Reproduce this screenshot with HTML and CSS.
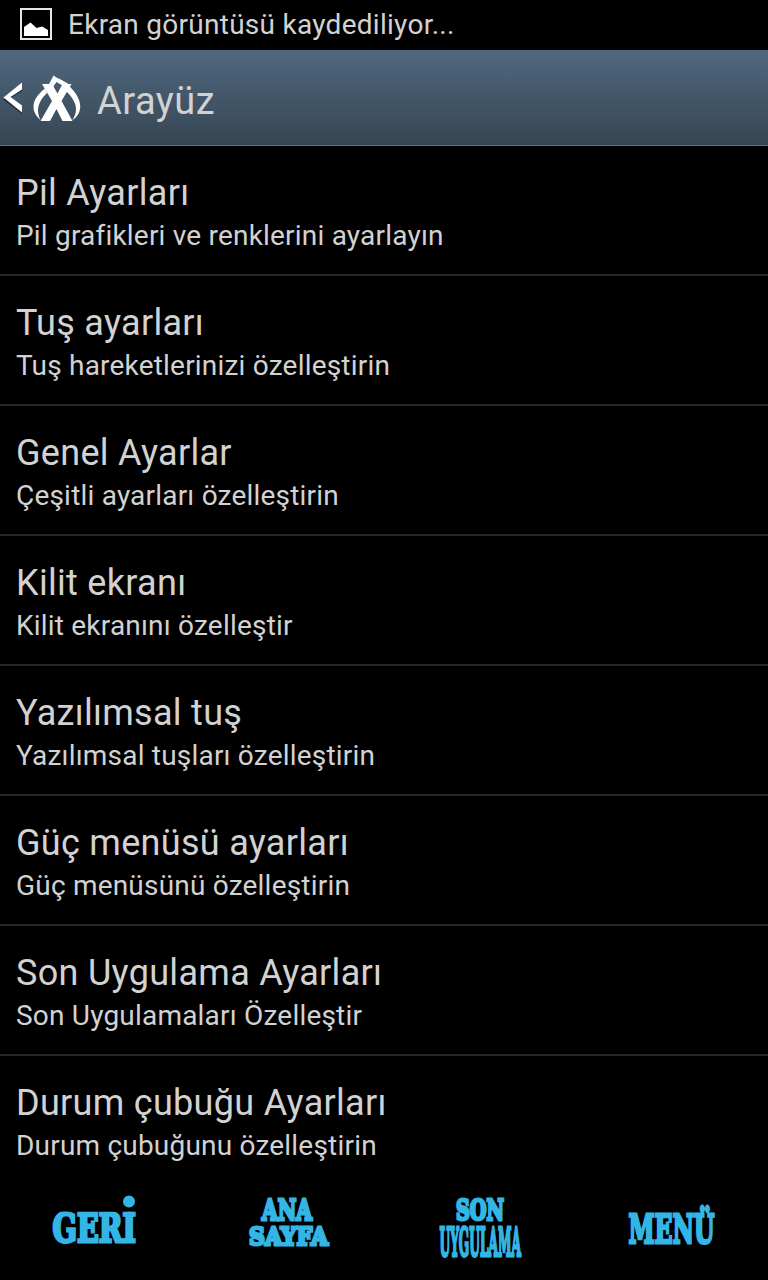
FILE: index.html
```html
<!DOCTYPE html>
<html lang="tr">
<head>
  <meta charset="UTF-8">
  <meta name="viewport" content="width=device-width, initial-scale=1.0">
  <title>Arayüz</title>
  <link rel="stylesheet" href="styles.css">
</head>
<body>
  <div class="status-bar">
    <svg class="picture-icon" width="34" height="34" viewBox="0 0 34 34">
      <rect x="2" y="2" width="30" height="30" fill="none" stroke="#e6e6e6" stroke-width="2"/>
      <path d="M5 29V20L11.500 15.500L17.500 21L23 19.500L29 23V29Z" fill="#fff"/>
    </svg>
    <span>Ekran görüntüsü kaydediliyor...</span>
  </div>

  <header class="action-bar">
    <svg class="back-icon" width="24" height="34" viewBox="0 0 24 34">
      <path d="M22 3V10L10.500 17L22 26V33L3.500 18.500Z" fill="#1c2730"/>
      <path d="M22 1.500V8.500L10.500 16L22 24.500V31.500L3.500 16.500Z" fill="#fff"/>
    </svg>
    <svg class="app-icon" width="48" height="48" viewBox="0 0 48 48">
      <path d="M12 13.500C-3 25-2 37 7.500 45C3 36 4.500 27 14 18Z" fill="#fff"/>
      <path d="M35 10C50 23 51 38 39 45.500C45.500 36 44.500 27 33 16Z" fill="#fff"/>
      <path d="M20.500 0.500C25 4 33 6 37.500 11L32 12L23.500 7L20 12L15.500 10Z" fill="#fff"/>
      <path d="M9 9H19L24.500 18.500L29.500 9H38.500L28.500 26L39.500 46H29.500L23.500 34L17 46H7.500L19 26Z" fill="#fff"/>
    </svg>
    <h1>Arayüz</h1>
  </header>

  <ul class="settings">
    <li>
      <h2>Pil Ayarları</h2>
      <p>Pil grafikleri ve renklerini ayarlayın</p>
    </li>
    <li>
      <h2>Tuş ayarları</h2>
      <p>Tuş hareketlerinizi özelleştirin</p>
    </li>
    <li>
      <h2>Genel Ayarlar</h2>
      <p>Çeşitli ayarları özelleştirin</p>
    </li>
    <li>
      <h2>Kilit ekranı</h2>
      <p>Kilit ekranını özelleştir</p>
    </li>
    <li>
      <h2>Yazılımsal tuş</h2>
      <p>Yazılımsal tuşları özelleştirin</p>
    </li>
    <li>
      <h2>Güç menüsü ayarları</h2>
      <p>Güç menüsünü özelleştirin</p>
    </li>
    <li>
      <h2>Son Uygulama Ayarları</h2>
      <p>Son Uygulamaları Özelleştir</p>
    </li>
    <li>
      <h2>Durum çubuğu Ayarları</h2>
      <p>Durum çubuğunu özelleştirin</p>
    </li>
  </ul>

  <nav class="nav-bar">
    <svg viewBox="0 0 192 96">
      <!-- the round dot replaces the font's own one -->
      <clipPath id="below-dot"><rect x="0" y="27.500" width="192" height="69"/></clipPath>
      <g clip-path="url(#below-dot)">
        <text x="52.500" y="58" font-size="38.500" textLength="83.500" lengthAdjust="spacingAndGlyphs">GERİ</text>
      </g>
      <circle cx="129" cy="17.500" r="4.500"/>
    </svg>
    <svg viewBox="0 0 192 96">
      <text x="70" y="36" font-size="27" textLength="50" lengthAdjust="spacingAndGlyphs">ANA</text>
      <text x="57" y="61" font-size="25" textLength="79" lengthAdjust="spacingAndGlyphs">SAYFA</text>
    </svg>
    <svg viewBox="0 0 192 96">
      <text x="72" y="36" font-size="27" textLength="48" lengthAdjust="spacingAndGlyphs">SON</text>
      <text x="55.500" y="71.500" font-size="39.500" textLength="81.500" lengthAdjust="spacingAndGlyphs">UYGULAMA</text>
    </svg>
    <svg viewBox="0 0 192 96">
      <text x="52.500" y="58.500" font-size="40" textLength="86" lengthAdjust="spacingAndGlyphs">MENÜ</text>
    </svg>
  </nav>
</body>
</html>
```
FILE: styles.css
```css
* {
  box-sizing: border-box;
}

body {
  margin: 0;
  height: 1280px;
  display: flex;
  flex-direction: column;
  overflow: hidden;
  background-color: #000;
  color: #d2d2d2;
  font-family: Roboto, sans-serif;
}

h1, h2, p, ul {
  margin: 0;
  padding: 0;
  font-weight: normal;
}

.status-bar {
  height: 50px;
  padding-left: 19px;
  display: flex;
  flex-shrink: 0;
  align-items: center;
  gap: 15px;
  font-size: 28px;
  line-height: 50px;
  letter-spacing: 0.27px;
}

.status-bar span {
  height: 50px;
}

.picture-icon {
  margin-top: -2px;
}

.action-bar {
  height: 96px;
  flex-shrink: 0;
  display: flex;
  align-items: center;
  background: linear-gradient(#50687f, #364553);
  border-bottom: 1px solid #60737d;
}

.action-bar h1 {
  margin-left: 16px;
  padding-top: 6px;
  font-size: 38px;
  line-height: 48px;
  letter-spacing: 0.5px;
}

.app-icon {
  margin-left: 9px;
  margin-top: 3px;
}

.settings {
  list-style: none;
  height: 1038px;
  overflow: hidden;
}

.settings li {
  height: 130px;
  padding: 26px 16px 0;
  border-bottom: 2px solid #282828;
}

.settings h2 {
  font-size: 36px;
  line-height: 43px;
  letter-spacing: 0.3px;
}

.settings p {
  font-size: 28px;
  line-height: 42px;
  letter-spacing: 0.2px;
}

.nav-bar {
  height: 96px;
  flex-shrink: 0;
  display: flex;
}

.nav-bar svg {
  width: 192px;
  height: 96px;
  fill: #33b5e5;
  stroke: #33b5e5;
  stroke-width: 3;
  font-family: "DejaVu Serif", serif;
  font-weight: bold;
}
```
